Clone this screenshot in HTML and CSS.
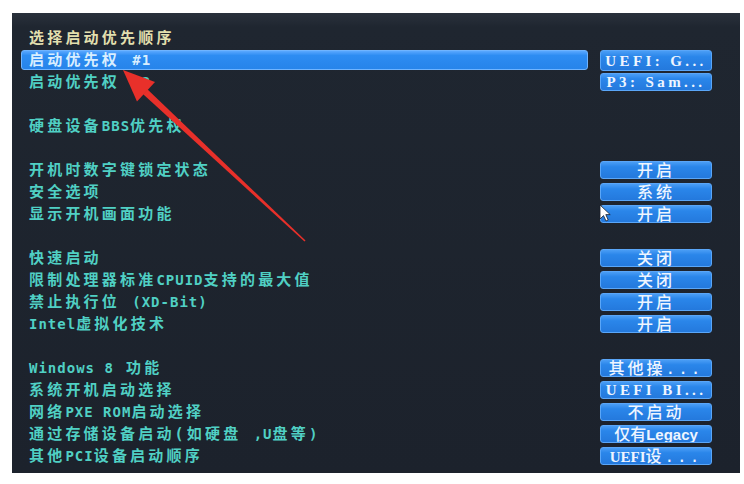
FILE: index.html
```html
<!DOCTYPE html>
<html lang="zh-CN">
<head>
    <meta charset="UTF-8">
    <title>BIOS 启动设置</title>
    <link rel="stylesheet" href="styles.css">
</head>
<body>

    <div class="screen">
        <div class="row title">
            <span class="label">选择启动优先顺序</span>
        </div>
        <div class="row">
            <span class="label selected">启动优先权 <span class="en">#1</span></span>
            <span class="value first en-btn">UEFI: G...</span>
        </div>
        <div class="row">
            <span class="label">启动优先权 <span class="en">#2</span></span>
            <span class="value en-btn">P3: Sam...</span>
        </div>
        <div class="row"></div>
        <div class="row">
            <span class="label">硬盘设备<span class="en">BBS</span>优先权</span>
        </div>
        <div class="row"></div>

        <div class="row">
            <span class="label">开机时数字键锁定状态</span>
            <span class="value">开启</span>
        </div>
        <div class="row">
            <span class="label">安全选项</span>
            <span class="value">系统</span>
        </div>
        <div class="row">
            <span class="label">显示开机画面功能</span>
            <span class="value">开启</span>
        </div>
        <div class="row"></div>

        <div class="row">
            <span class="label">快速启动</span>
            <span class="value">关闭</span>
        </div>
        <div class="row">
            <span class="label">限制处理器标准<span class="en">CPUID</span>支持的最大值</span>
            <span class="value">关闭</span>
        </div>
        <div class="row">
            <span class="label">禁止执行位 <span class="en">(XD-Bit)</span></span>
            <span class="value">开启</span>
        </div>
        <div class="row">
            <span class="label"><span class="en">Intel</span>虚拟化技术</span>
            <span class="value">开启</span>
        </div>
        <div class="row"></div>

        <div class="row">
            <span class="label"><span class="en">Windows 8</span> 功能</span>
            <span class="value">其他操...</span>
        </div>
        <div class="row">
            <span class="label">系统开机启动选择</span>
            <span class="value en-btn">UEFI BI...</span>
        </div>
        <div class="row">
            <span class="label">网络<span class="en">PXE ROM</span>启动选择</span>
            <span class="value">不启动</span>
        </div>
        <div class="row">
            <span class="label">通过存储设备启动(如硬盘 <span class="en">,U</span>盘等<span class="en">)</span></span>
            <span class="value tight">仅有<b>Legacy</b></span>
        </div>
        <div class="row">
            <span class="label">其他<span class="en">PCI</span>设备启动顺序</span>
            <span class="value"><span class="serif">UEFI</span>设...</span>
        </div>
    </div>

    <!-- annotation arrow and mouse pointer drawn over the screen -->
    <svg class="overlay" width="744" height="484" viewBox="0 0 744 484">
        <polygon fill="#e8302a" points="147.6,89.6 305.5,240.5 304.5,241.5 143.2,94.2"/>
        <polygon fill="#e8302a" points="123,70 155,82 137,101.5"/>
        <path d="M600 205 L600 219 L603.5 215.6 L606 221 L608.2 220 L605.8 214.6 L610.2 214.6 Z"
              fill="#ffffff" stroke="#1b2029" stroke-width="0.8"/>
    </svg>

</body>
</html>
```

FILE: styles.css
```css
* {
    margin: 0;
    padding: 0;
    box-sizing: border-box;
}

body {
    background-color: #ffffff;
    width: 744px;
    height: 484px;
    position: relative;
    overflow: hidden;
    font-family: "DejaVu Sans Mono", "Noto Sans CJK SC", monospace;
    font-weight: bold;
}

/* BIOS screen */
.screen {
    position: absolute;
    left: 12px;
    top: 13px;
    width: 728px;
    height: 460px;
    padding: 14px 28px 0 9px;
    background: linear-gradient(180deg, #2a313c 0px, #1f2630 14px, #1c222c 100%);
}

.row {
    display: flex;
    align-items: center;
    height: 22px;
}

.label {
    flex: 0 0 567px;
    height: 20px;
    line-height: 20px;
    padding-left: 8px;
    font-size: 15px;
    letter-spacing: 3.2px;
    color: #50d0c4;
    white-space: nowrap;
}

.label .en {
    font-size: 14px;
    letter-spacing: 1px;
}

.title .label {
    color: #e2dfae;
}

.label.selected {
    color: #d8eeff;
    background: linear-gradient(180deg, #5aa8ff 0%, #2d8cf2 25%, #2684ea 100%);
    border: 1px solid #6fb4ff;
    border-radius: 3px;
    line-height: 18px;
    padding-left: 7px;
}

/* option value buttons */
.value {
    margin-left: 12px;
    width: 112px;
    height: 18px;
    line-height: 17px;
    text-align: center;
    font-size: 16px;
    font-weight: 500;
    letter-spacing: 3px;
    color: #eef5ff;
    background: linear-gradient(180deg, #4a9df5 0%, #2a86ea 30%, #2479dd 100%);
    border: 1px solid #5aa6f8;
    border-radius: 3px;
    white-space: nowrap;
    overflow: hidden;
}

.value.en-btn,
.value .serif {
    font-family: "Liberation Serif", "Noto Sans CJK SC", serif;
    font-weight: bold;
    font-size: 15px;
    letter-spacing: 3.4px;
}

.value .serif {
    letter-spacing: 0;
}

.value.tight {
    letter-spacing: 0;
}

.value.tight b {
    font-family: "Liberation Sans", sans-serif;
    font-size: 15px;
}

.value.first {
    height: 21px;
    line-height: 20px;
}

.overlay {
    position: absolute;
    left: 0;
    top: 0;
    pointer-events: none;
}
```
